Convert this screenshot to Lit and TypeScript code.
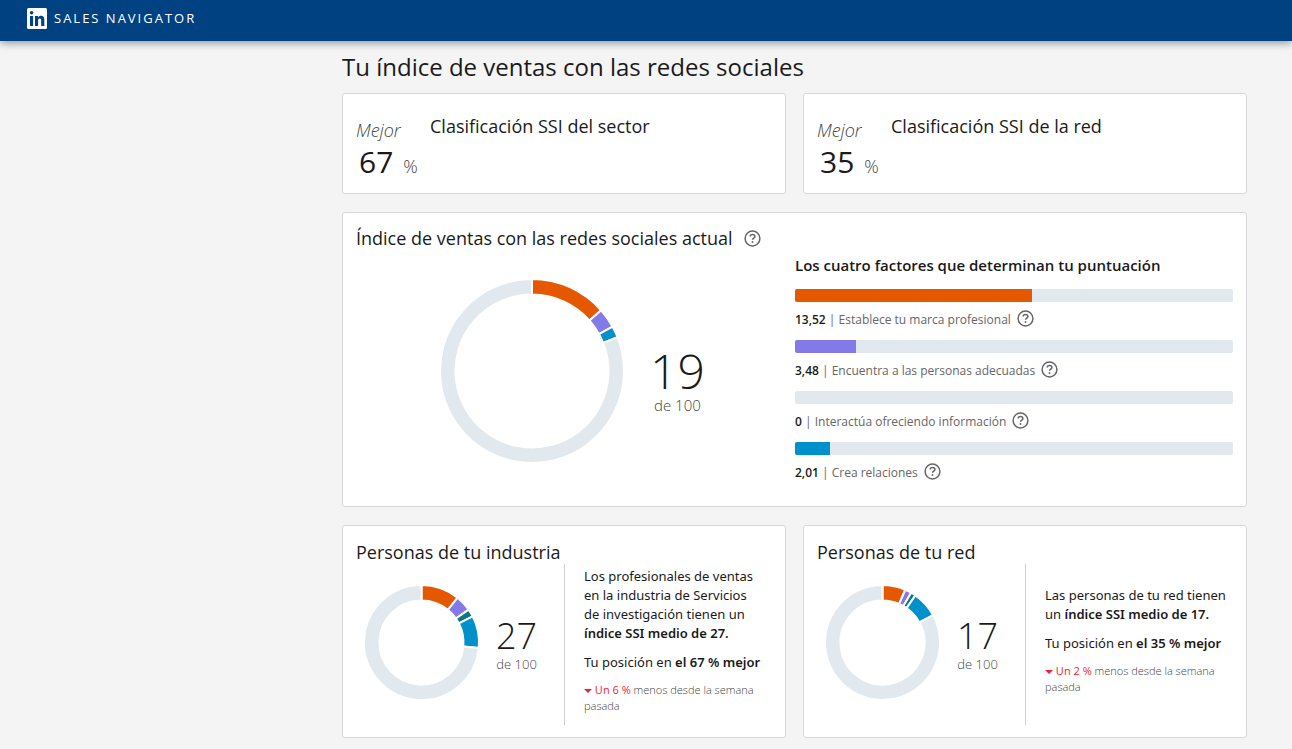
import { LitElement, html, svg, css } from "lit";
import { customElement, property } from "lit/decorators.js";

interface Segment {
  value: number;
  color: string;
}

const ORANGE = "#e55800";
const PURPLE = "#8479e8";
const TEAL = "#077a86";
const BLUE = "#0091ca";
const TRACK = "#e1e8ee";

@customElement("ssi-donut")
export class SsiDonut extends LitElement {
  @property({ type: Number }) size = 182;
  @property({ attribute: false }) segments: Segment[] = [];
  @property() label = "";

  static styles = css`
    :host {
      display: block;
      flex: none;
    }
    .ring {
      display: block;
      overflow: visible;
    }
  `;

  private slice(from: number, to: number, color: string) {
    const c = this.size / 2;
    const outer = c + 1;
    const inner = c - 14.5;
    const pt = (r: number, v: number) => {
      const a = (v / 100) * 2 * Math.PI;
      return `${(c + r * Math.sin(a)).toFixed(2)} ${(c - r * Math.cos(a)).toFixed(2)}`;
    };
    const large = to - from > 50 ? 1 : 0;
    const d = `M${pt(outer, from)}A${outer} ${outer} 0 ${large} 1 ${pt(outer, to)}L${pt(inner, to)}A${inner} ${inner} 0 ${large} 0 ${pt(inner, from)}Z`;
    return svg`<path d=${d} fill=${color} stroke="#fff" stroke-width="2" stroke-linejoin="round"></path>`;
  }

  render() {
    let at = 0;
    const slices = this.segments
      .filter((s) => s.value > 0)
      .map((s) => {
        const from = at;
        at += s.value;
        return this.slice(from, at, s.color);
      });
    return html`<svg class="ring" width=${this.size} height=${this.size}
      viewBox="0 0 ${this.size} ${this.size}" role="img" aria-label=${this.label}>
      ${slices}${this.slice(at, 100, TRACK)}
    </svg>`;
  }
}

@customElement("help-button")
export class HelpButton extends LitElement {
  @property() label = "Más información";

  static styles = css`
    :host {
      display: inline-flex;
      flex: none;
    }
    .help {
      display: flex;
      margin: 0;
      padding: 0;
      border: 0;
      background: none;
      color: #666;
      cursor: pointer;
    }
  `;

  render() {
    return html`<button class="help" type="button" aria-label=${this.label}>
      <svg width="17" height="17" viewBox="0 0 17 17" fill="none" stroke="currentColor" stroke-width="1.5">
        <circle cx="8.5" cy="8.5" r="7.4"></circle>
        <path d="M6.2 6.6c0-1.3 1-2 2.3-2s2.4.7 2.4 1.9c0 1.6-2.3 1.6-2.3 3.2"></path>
        <circle cx="8.5" cy="12" r=".95" fill="currentColor" stroke="none"></circle>
      </svg>
    </button>`;
  }
}

const ranks = [
  { title: "Clasificación SSI del sector", value: 67 },
  { title: "Clasificación SSI de la red", value: 35 },
];

const factors = [
  { score: "13,52", value: 13.52, color: ORANGE, name: "Establece tu marca profesional" },
  { score: "3,48", value: 3.48, color: PURPLE, name: "Encuentra a las personas adecuadas" },
  { score: "0", value: 0, color: TEAL, name: "Interactúa ofreciendo información" },
  { score: "2,01", value: 2.01, color: BLUE, name: "Crea relaciones" },
];

const groups = [
  {
    title: "Personas de tu industria",
    score: 27,
    segments: [
      { value: 10.8, color: ORANGE },
      { value: 4.5, color: PURPLE },
      { value: 2.2, color: TEAL },
      { value: 9, color: BLUE },
    ],
    text: html`Los profesionales de ventas<br>en la industria de Servicios<br>de investigación tienen un<br><b>índice SSI medio de 27.</b>`,
    rank: "el 67 % mejor",
    drop: "Un 6 %",
  },
  {
    title: "Personas de tu red",
    score: 17,
    segments: [
      { value: 6.5, color: ORANGE },
      { value: 1.8, color: PURPLE },
      { value: 1.4, color: TEAL },
      { value: 7.4, color: BLUE },
    ],
    text: html`Las personas de tu red tienen<br>un <b>índice SSI medio de 17.</b>`,
    rank: "el 35 % mejor",
    drop: "Un 2 %",
  },
];

@customElement("app-root")
export class AppRoot extends LitElement {
  static styles = css`
    :host {
      display: block;
      min-height: 100vh;
      background: #f4f4f4;
      color: #1a1a1a;
      font-family: "Segoe UI", "Open Sans", "Noto Sans", sans-serif;
      font-size: 13px;
      line-height: 19px;
    }
    * {
      box-sizing: border-box;
    }
    h1, h2, h3, p, ul {
      margin: 0;
      padding: 0;
      font-weight: 400;
    }
    b {
      font-weight: 600;
    }
    .bar {
      display: flex;
      align-items: center;
      height: 41px;
      padding: 0 27px 4px;
      background: #004182;
      box-shadow: 0 2px 8px rgba(0, 0, 0, 0.4);
    }
    .brand {
      display: flex;
      align-items: center;
      gap: 7px;
      color: #fff;
      font-size: 13px;
      letter-spacing: 2px;
      text-decoration: none;
      text-transform: uppercase;
    }
    .page {
      display: grid;
      grid-template-columns: 297px minmax(0, 1fr);
      padding: 8px 45px 11px;
    }
    .content {
      grid-column: 2;
      display: flex;
      flex-direction: column;
      gap: 18px;
    }
    .top {
      display: flex;
      flex-direction: column;
      gap: 8px;
    }
    .headline {
      font-size: 24px;
      line-height: 36px;
    }
    .pair {
      display: grid;
      grid-template-columns: 1fr 1fr;
      gap: 17px;
    }
    .card {
      padding: 12px 13px;
      border: 1px solid #d8d8d8;
      border-radius: 3px;
      background: #fff;
    }
    .card-title {
      font-size: 18px;
      line-height: 28px;
    }
    .rank {
      display: flex;
      gap: 28px;
      padding-top: 18px;
      padding-bottom: 13px;
    }
    .best {
      font-size: 18px;
      font-style: italic;
      font-weight: 300;
      line-height: 36px;
      color: #444;
    }
    .percent {
      display: flex;
      align-items: baseline;
      gap: 10px;
      padding-left: 3px;
      line-height: 28px;
    }
    .percent-value {
      font-size: 30px;
    }
    .percent-sign {
      font-size: 18px;
      font-weight: 300;
      color: #444;
    }
    .rank-side {
      width: 46px;
    }
    .current {
      display: grid;
      grid-template-columns: 439px minmax(0, 1fr);
    }
    .title-row {
      display: flex;
      align-items: center;
      gap: 11px;
    }
    .title-row .card-title {
      line-height: 26px;
    }
    .gauge {
      display: flex;
      align-items: center;
      gap: 27px;
      padding: 29px 0 32px 85px;
    }
    .score {
      text-align: center;
    }
    .score-value {
      font-size: 48px;
      font-weight: 300;
      line-height: 48px;
    }
    .score-total {
      font-size: 15px;
      font-weight: 300;
      line-height: 20px;
      color: #444;
    }
    .gauge .score {
      padding-top: 20px;
    }
    .factors {
      padding-top: 29px;
    }
    .factors-title {
      padding-bottom: 13px;
      font-size: 15px;
      font-weight: 600;
      line-height: 22px;
    }
    .factor-list {
      display: grid;
      gap: 10px;
      list-style: none;
    }
    .track {
      height: 13px;
      overflow: hidden;
      border-radius: 2px;
      background: #e1e8ee;
    }
    .fill {
      height: 100%;
    }
    .factor-row {
      display: flex;
      align-items: center;
      gap: 6px;
      height: 28px;
      padding-top: 8px;
      line-height: 20px;
      font-size: 12px;
      color: #666;
    }
    .factor-row help-button {
      padding-bottom: 3px;
    }
    .factor-score {
      color: #1a1a1a;
    }
    .group {
      display: grid;
      grid-template-columns: 208px minmax(0, 1fr);
    }
    .group-gauge {
      display: flex;
      align-items: center;
      gap: 18px;
      padding: 20px 0 0 9px;
    }
    .group .score {
      padding-top: 7px;
    }
    .group .score-value {
      font-size: 36px;
      line-height: 36px;
    }
    .group .score-total {
      font-size: 13px;
    }
    .details {
      display: flex;
      flex-direction: column;
      justify-content: center;
      gap: 10px;
      min-height: 161px;
      margin-top: 26px;
      padding: 0 0 8px 19px;
      border-left: 1px solid #d0d0d0;
      font-family: "Segoe UI", "Noto Sans", "Open Sans", sans-serif;
      font-size: 13px;
    }
    .change {
      font-family: "Segoe UI", "Open Sans", "Noto Sans", sans-serif;
      font-size: 11px;
      font-weight: 300;
      line-height: 16px;
      color: #444;
    }
    .drop {
      color: #f5222d;
      font-weight: 400;
    }
  `;

  render() {
    return html`
      <header class="bar">
        <a class="brand" href="#">
          <svg width="20" height="21" viewBox="0 0 20 21" aria-hidden="true">
            <rect width="20" height="21" rx="1.5" fill="#fff"></rect>
            <g fill="#004182">
              <circle cx="4.6" cy="4.8" r="1.8"></circle>
              <rect x="3" y="8" width="3.1" height="10"></rect>
              <path d="M8 8h3v1.4c.6-1 1.7-1.6 3-1.6 2.4 0 3.3 1.6 3.3 4V18h-3.1v-5.5c0-1.3-.4-2.1-1.4-2.1-1.2 0-1.7.9-1.7 2.2V18H8z"></path>
            </g>
          </svg>
          <span>Sales Navigator</span>
        </a>
      </header>
      <main class="page">
        <div class="content">
          <div class="top">
            <h1 class="headline">Tu índice de ventas con las redes sociales</h1>
            <div class="pair">
              ${ranks.map(
                (r) => html`<section class="card rank">
                  <div class="rank-side">
                    <p class="best">Mejor</p>
                    <p class="percent">
                      <span class="percent-value">${r.value}</span><span class="percent-sign">%</span>
                    </p>
                  </div>
                  <h2 class="card-title">${r.title}</h2>
                </section>`
              )}
            </div>
          </div>
          <section class="card current">
            <div>
              <div class="title-row">
                <h2 class="card-title">Índice de ventas con las redes sociales actual</h2>
                <help-button></help-button>
              </div>
              <div class="gauge">
                <ssi-donut .size=${182} .segments=${factors} label="19 de 100"></ssi-donut>
                <div class="score">
                  <p class="score-value">19</p>
                  <p class="score-total">de 100</p>
                </div>
              </div>
            </div>
            <div class="factors">
              <h3 class="factors-title">Los cuatro factores que determinan tu puntuación</h3>
              <ul class="factor-list">
                ${factors.map(
                  (f) => html`<li>
                    <div class="track">
                      <div class="fill" style="width:${f.value * 4}%;background:${f.color}"></div>
                    </div>
                    <div class="factor-row">
                      <span><b class="factor-score">${f.score}</b> | ${f.name}</span>
                      <help-button label=${f.name}></help-button>
                    </div>
                  </li>`
                )}
              </ul>
            </div>
          </section>
          <div class="pair">
            ${groups.map(
              (g) => html`<section class="card group">
                <div>
                  <h2 class="card-title">${g.title}</h2>
                  <div class="group-gauge">
                    <ssi-donut .size=${113} .segments=${g.segments} label="${g.score} de 100"></ssi-donut>
                    <div class="score">
                      <p class="score-value">${g.score}</p>
                      <p class="score-total">de 100</p>
                    </div>
                  </div>
                </div>
                <div class="details">
                  <p>${g.text}</p>
                  <p>Tu posición en <b>${g.rank}</b></p>
                  <p class="change">
                    <svg width="8" height="5" viewBox="0 0 8 5" aria-hidden="true"><path d="M0 0h8L4 4z" fill="#f5222d"></path></svg>
                    <span class="drop">${g.drop}</span> menos desde la semana pasada
                  </p>
                </div>
              </section>`
            )}
          </div>
        </div>
      </main>
    `;
  }
}
